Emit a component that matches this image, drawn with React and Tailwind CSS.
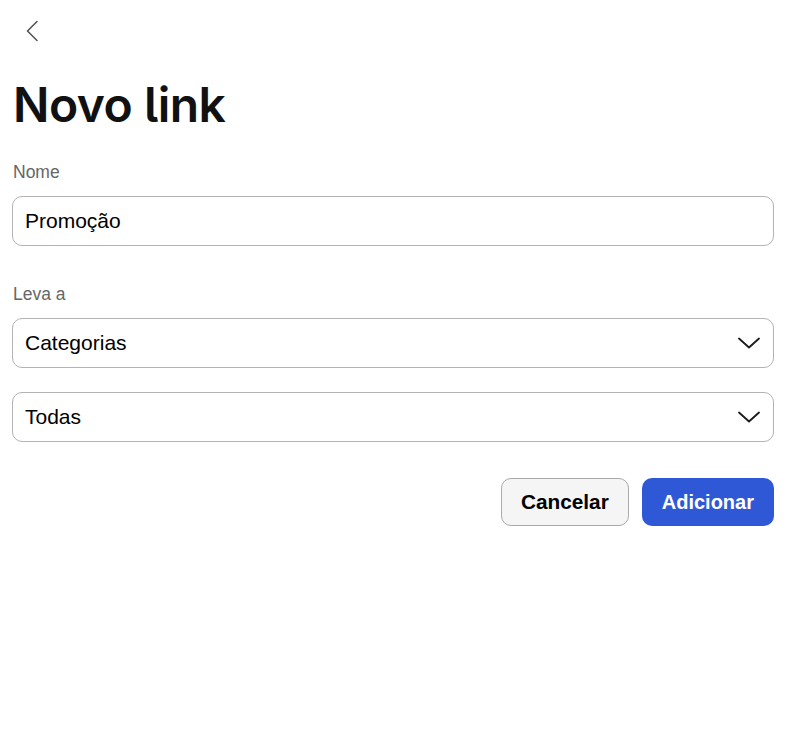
import { useState } from "react";

const ChevronDown = () => (
  <svg width="22" height="12" viewBox="0 0 22 12" fill="none" className="shrink-0">
    <path d="M1 1.5 L11 10.5 L21 1.5" stroke="#1a1a1a" strokeWidth="1.8" strokeLinecap="round" strokeLinejoin="round" />
  </svg>
);

const Select = ({ value }) => (
  <button
    type="button"
    className="w-full h-[50px] flex items-center justify-between pl-[12px] pr-[13px] border border-[#b3b3b3] rounded-[10px] bg-white text-[21px] text-black text-left"
  >
    <span>{value}</span>
    <ChevronDown />
  </button>
);

export default function App() {
  const [name, setName] = useState("Promoção");

  return (
    <div className="min-h-[733px] bg-white pl-[12px] pr-[15px] font-['Liberation_Sans',Arial,sans-serif]">
      <div className="h-[62px] flex items-center">
        <button type="button" className="ml-[13px] w-[14px] h-[24px] flex items-center">
          <svg width="14" height="22" viewBox="0 0 14 22" fill="none">
            <path d="M12 1.5 L2.5 11 L12 20.5" stroke="#555" strokeWidth="1.6" strokeLinecap="round" strokeLinejoin="round" />
          </svg>
        </button>
      </div>

      <h1 className="mt-[19px] ml-[1px] text-[48px] leading-[48px] font-semibold tracking-[-0.5px] text-[#111] font-['Inter',sans-serif] [font-feature-settings:'cv05']">
        Novo link
      </h1>

      <label className="block mt-[31px] ml-[1px] text-[17.5px] leading-[24px] text-[#666]">Nome</label>
      <input
        type="text"
        value={name}
        onChange={(e) => setName(e.target.value)}
        className="mt-[12px] w-full h-[50px] px-[12px] border border-[#b3b3b3] rounded-[10px] text-[21px] text-black outline-none"
      />

      <label className="block mt-[36px] ml-[1px] text-[17.5px] leading-[24px] text-[#666]">Leva a</label>
      <div className="mt-[12px] flex flex-col gap-[24px]">
        <Select value="Categorias" />
        <Select value="Todas" />
      </div>

      <div className="mt-[36px] flex justify-end gap-[13px]">
        <button
          type="button"
          className="h-[48px] px-[19px] rounded-[10px] border border-[#aaa] bg-[#f5f5f5] text-[20.8px] font-bold text-black"
        >
          Cancelar
        </button>
        <button
          type="button"
          className="h-[48px] px-[20px] rounded-[10px] bg-[#2f58d6] text-[20px] font-bold text-white"
        >
          Adicionar
        </button>
      </div>
    </div>
  );
}
